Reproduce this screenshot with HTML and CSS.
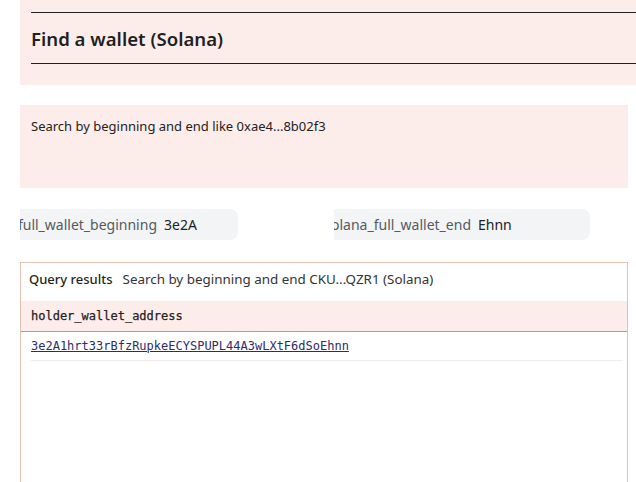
FILE: index.html
```html
<!DOCTYPE html>
<html>
<head>
<meta charset="utf-8">
<link rel="stylesheet" href="styles.css">
</head>
<body>
<div class="page">
  <section class="title-panel">
    <div class="title-rule">
      <h1 class="title">Find a wallet (Solana)</h1>
    </div>
  </section>
  <section class="desc-panel">
    <p class="desc">Search by beginning and end like 0xae4...8b02f3</p>
  </section>
  <div class="inputs">
    <div class="field field-begin">
      <div class="label-wrap"><span class="label">solana_full_wallet_beginning</span></div>
      <span class="value">3e2A</span>
    </div>
    <div class="field field-end">
      <div class="label-wrap"><span class="label">solana_full_wallet_end</span></div>
      <span class="value">Ehnn</span>
    </div>
  </div>
  <section class="results">
    <div class="results-head">
      <span class="results-title">Query results</span>
      <span class="results-sub">Search by beginning and end CKU...QZR1 (Solana)</span>
    </div>
    <div class="table">
      <div class="th">holder_wallet_address</div>
      <div class="tr"><a class="addr" href="#">3e2A1hrt33rBfzRupkeECYSPUPL44A3wLXtF6dSoEhnn</a></div>
    </div>
  </section>
</div>
</body>
</html>
```

FILE: styles.css
```css
html, body {
  margin: 0;
  padding: 0;
  background: #ffffff;
  overflow: hidden;
}
body {
  font-family: "Noto Sans", "Open Sans", sans-serif;
  color: #222222;
}
.page {
  padding-left: 20px;
  width: 616px;
}
.title-panel {
  background: #fdedea;
  height: 85px;
  box-sizing: border-box;
  padding: 12px 0 0 11px;
}
.title-rule {
  border-top: 1px solid #222;
  border-bottom: 1px solid #222;
  height: 52px;
  box-sizing: border-box;
  display: flex;
  align-items: center;
}
.title {
  margin: 0;
  font-size: 18.6px;
  font-weight: 600;
  color: #1f1f24;
}
.desc-panel {
  margin-top: 20px;
  width: 608px;
  height: 83px;
  box-sizing: border-box;
  background: #fdedea;
  padding: 13px 11px;
}
.desc {
  margin: 0;
  font-size: 13px;
  line-height: 17px;
  color: #222;
}
.inputs {
  margin-top: 21px;
  display: flex;
  gap: 96px;
}
.field {
  height: 31px;
  background: #f3f4f6;
  border-radius: 0 8px 8px 0;
  display: flex;
  align-items: center;
  font-size: 14px;
  color: #555;
}
.field-begin { width: 218px; }
.field-end { width: 256px; }
.label-wrap {
  overflow: hidden;
  display: flex;
  justify-content: flex-end;
  white-space: nowrap;
  flex-shrink: 0;
}
.field-begin .label-wrap { width: 137px; }
.field-end .label-wrap { width: 137px; }
.label {
  flex-shrink: 0;
  color: #555a5f;
}
.value {
  margin-left: 7px;
  color: #222;
}
.results {
  margin-top: 22px;
  width: 608px;
  height: 260px;
  box-sizing: border-box;
  border: 1px solid #e6c0b2;
}
.results-head {
  height: 38px;
  box-sizing: border-box;
  display: flex;
  align-items: flex-start;
  padding: 7px 0 0 8px;
  line-height: 18px;
  gap: 10px;
}
.results-title {
  font-size: 13px;
  font-weight: 500;
  color: #1f1f24;
}
.results-sub {
  font-size: 13.4px;
  color: #333;
}
.th {
  height: 30px;
  background: #fdedea;
  border-bottom: 1px solid #a89f9c;
  display: flex;
  align-items: center;
  padding-left: 10px;
  font-family: "DejaVu Sans Mono", "Liberation Mono", monospace;
  font-size: 12px;
  color: #222;
  -webkit-text-stroke: 0.25px #222;
}
.tr {
  height: 28px;
  margin: 0 4px 0 10px;
  border-bottom: 1px solid #efeceb;
  display: flex;
  align-items: center;
}
.addr {
  font-family: "DejaVu Sans Mono", "Liberation Mono", monospace;
  font-size: 12px;
  color: #2f2b6b;
  text-decoration: underline;
}
```
